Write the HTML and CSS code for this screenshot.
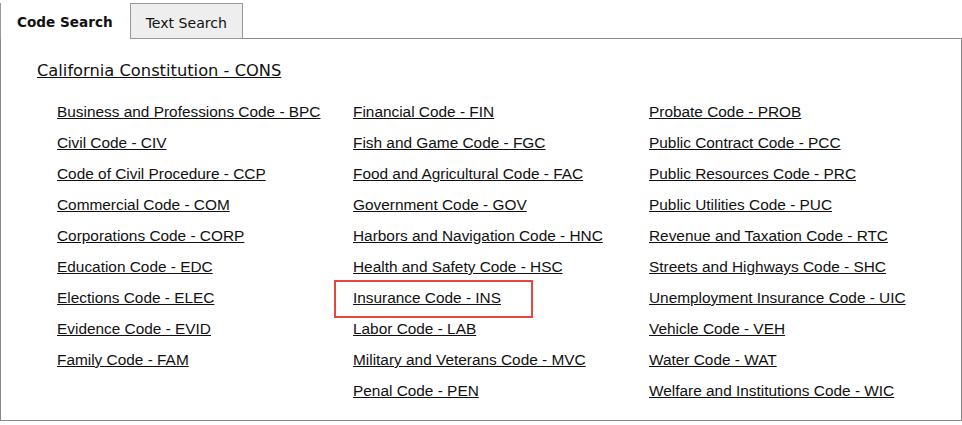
FILE: index.html
```html
<!DOCTYPE html>
<html lang="en">
<head>
    <meta charset="UTF-8">
    <title>Code Search</title>
    <link rel="stylesheet" href="styles.css">
</head>
<body>
    <!-- Tabs -->
    <div class="tabs">
        <div class="tab active">Code Search</div>
        <div class="tab">Text Search</div>
        <div class="tab-fill"></div>
    </div>

    <!-- Code list -->
    <div class="panel">
        <a class="constitution" href="#">California Constitution - CONS</a>
        <div class="codes">
            <ul class="code-col">
                <li><a href="#">Business and Professions Code - BPC</a></li>
                <li><a href="#">Civil Code - CIV</a></li>
                <li><a href="#">Code of Civil Procedure - CCP</a></li>
                <li><a href="#">Commercial Code - COM</a></li>
                <li><a href="#">Corporations Code - CORP</a></li>
                <li><a href="#">Education Code - EDC</a></li>
                <li><a href="#">Elections Code - ELEC</a></li>
                <li><a href="#">Evidence Code - EVID</a></li>
                <li><a href="#">Family Code - FAM</a></li>
            </ul>
            <ul class="code-col">
                <li><a href="#">Financial Code - FIN</a></li>
                <li><a href="#">Fish and Game Code - FGC</a></li>
                <li><a href="#">Food and Agricultural Code - FAC</a></li>
                <li><a href="#">Government Code - GOV</a></li>
                <li><a href="#">Harbors and Navigation Code - HNC</a></li>
                <li><a href="#">Health and Safety Code - HSC</a></li>
                <li class="highlight"><a href="#">Insurance Code - INS</a></li>
                <li><a href="#">Labor Code - LAB</a></li>
                <li><a href="#">Military and Veterans Code - MVC</a></li>
                <li><a href="#">Penal Code - PEN</a></li>
            </ul>
            <ul class="code-col">
                <li><a href="#">Probate Code - PROB</a></li>
                <li><a href="#">Public Contract Code - PCC</a></li>
                <li><a href="#">Public Resources Code - PRC</a></li>
                <li><a href="#">Public Utilities Code - PUC</a></li>
                <li><a href="#">Revenue and Taxation Code - RTC</a></li>
                <li><a href="#">Streets and Highways Code - SHC</a></li>
                <li><a href="#">Unemployment Insurance Code - UIC</a></li>
                <li><a href="#">Vehicle Code - VEH</a></li>
                <li><a href="#">Water Code - WAT</a></li>
                <li><a href="#">Welfare and Institutions Code - WIC</a></li>
            </ul>
        </div>
    </div>
</body>
</html>
```

FILE: styles.css
```css
body, html {
    margin: 0;
    padding: 0;
    background: white;
}

body {
    padding: 3px 0 0 0;
}

/* Tabs */
.tabs {
    display: flex;
    height: 36px;
    font-family: "DejaVu Sans", Tahoma, sans-serif;
    font-size: 14.1px;
    color: #111;
}

.tab {
    padding: 0 15px 0 15px;
    line-height: 39px;
    height: 34px;
    background-color: #eeeeee;
    border: 1px solid #999;
    border-left: none;
}

.tab.active {
    height: 36px;
    background-color: white;
    font-size: 13.6px;
    font-weight: bold;
    border-top: none;
    border-bottom: none;
    border-left: 1px solid #999;
    padding: 0 17px 0 16px;
}

.tab-fill {
    flex: 1;
    border-bottom: 1px solid #888;
}

/* Panel */
.panel {
    border: 1px solid #888;
    border-top: none;
    padding: 22px 0 0 36px;
    box-sizing: border-box;
    height: 382px;
}

.constitution {
    font-family: "DejaVu Sans", Tahoma, sans-serif;
    font-size: 16.3px;
    color: #111;
}

.codes {
    display: grid;
    grid-template-columns: 296px 296px 296px;
    margin-top: 23px;
    padding-left: 20px;
}

.code-col {
    list-style: none;
    margin: 0;
    padding: 0;
}

.code-col li {
    height: 31px;
}

.code-col a {
    font-family: "Liberation Sans", Arial, sans-serif;
    font-size: 15.4px;
    color: #111;
    line-height: 18px;
}

.code-col li.highlight {
    position: relative;
}

.code-col li.highlight::before {
    content: "";
    position: absolute;
    left: -19px;
    top: -9px;
    width: 195px;
    height: 34px;
    border: 2px solid #e5473e;
}
```
